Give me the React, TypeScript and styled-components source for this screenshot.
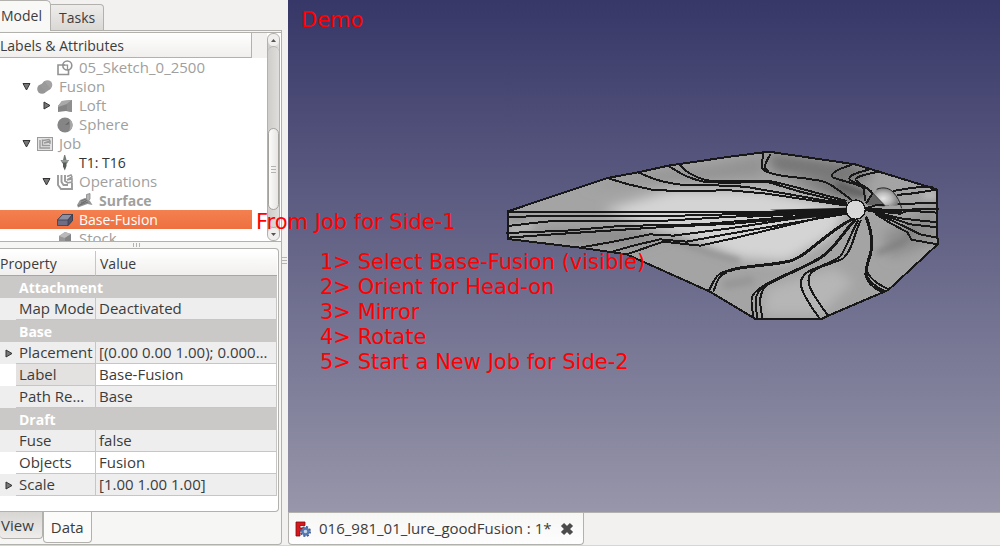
import React from 'react';
import styled, { createGlobalStyle, css } from 'styled-components';

const line = '#b3b1ad';

const GlobalStyle = createGlobalStyle`
  * { box-sizing: border-box; }
  body {
    margin: 0;
    background: #fff;
    color: #3c3c3c;
    font: 15px/19px 'Open Sans', 'Noto Sans', sans-serif;
  }
  button { font: inherit; color: inherit; }
`;

const Window = styled.div`
  display: flex;
  flex-direction: column;
  min-height: 100vh;
  padding-bottom: 3px;
  overflow: hidden;
`;

const Workspace = styled.div`
  flex: 1;
  display: grid;
  grid-template-columns: 282px 6px minmax(0, 1fr);
  background: #f2f1f0;
  border-bottom: 1px solid #d8d6d3;
`;

const Dock = styled.aside`
  display: flex;
  flex-direction: column;
  min-width: 0;
`;

const TopTabs = styled.div`
  display: flex;
  align-items: flex-end;
  height: 31px;
`;

const TopTab = styled.button<{ $active?: boolean }>`
  border: 1px solid ${line};
  padding: 0 8px;
  line-height: 24px;
  height: 27px;
  font-size: 14px;
  background: linear-gradient(#eeedeb, #dad8d5);
  border-left: 0;
  border-radius: 0 4px 0 0;
  ${p => p.$active && css`
    height: 31px;
    padding: 0 8px 0 1px;
    background: #f8f8f7;
    border-bottom: 0;
    border-radius: 0 5px 0 0;
  `}
`;

const TabFill = styled.div`
  flex: 1;
  height: 1px;
  background: ${line};
`;

const DockBody = styled.div`
  flex: 1;
  display: flex;
  flex-direction: column;
  border: 1px solid ${line};
  border-width: 0 1px 1px 0;
  border-radius: 0 0 4px 0;
  background: #f6f6f5;
`;

const TreePane = styled.section`
  display: flex;
  height: 210px;
  margin-top: 1px;
  border: 1px solid ${line};
  border-left: 0;
  border-right: 0;
  background: #fff;
`;

const TreeMain = styled.div`
  flex: 1;
  overflow: hidden;
`;

const TreeHeader = styled.div`
  height: 25px;
  padding-right: 15px;
  background: #f2f1f0;
`;

const TreeTitle = styled.h2`
  margin: 0;
  height: 25px;
  font-size: 14px;
  font-weight: 400;
  line-height: 25px;
  background: linear-gradient(#fff, #f0efed);
  border: 1px solid ${line};
  border-width: 0 1px 1px 0;
`;

const TreeList = styled.ul`
  list-style: none;
  margin: 0;
  padding: 0 15px 0 0;
`;

const TreeRow = styled.li<{ $depth: number; $tone: 'dim' | 'live' | 'selected'; $bold?: boolean }>`
  display: flex;
  align-items: center;
  height: 19px;
  padding-left: ${p => p.$depth * 20 - 2}px;
  color: ${p => ({ dim: '#a09f9e', live: '#333', selected: '#fff' })[p.$tone]};
  font-size: ${p => (p.$tone === 'dim' && !p.$bold ? 15 : 14)}px;
  font-weight: ${p => (p.$bold ? 700 : 400)};
  white-space: nowrap;
  background: ${p => (p.$tone === 'selected' ? 'linear-gradient(#f4804f, #ee7040)' : 'none')};
`;

const Arrow = styled.button`
  width: 16px;
  height: 19px;
  padding: 0;
  border: 0;
  background: none;
  display: grid;
  place-items: center;
`;

const ArrowGap = styled.span`
  width: 16px;
`;

const IconBox = styled.span`
  width: 25px;
  padding-left: 3px;
  height: 16px;
`;

const Scrollbar = styled.div`
  display: flex;
  flex-direction: column;
  width: 13px;
  margin-right: 1px;
  border: 1px solid ${line};
  border-radius: 6px;
  background: linear-gradient(90deg, #cfcdca, #e0dedc);
`;

const ScrollStep = styled.button`
  height: 12px;
  padding: 0;
  border: 0;
  border-radius: 6px;
  background: #f0efee;
  display: grid;
  place-items: center;
`;

const ScrollTrack = styled.div`
  flex: 1;
  display: flex;
  flex-direction: column;
  justify-content: flex-end;
  border: 1px solid ${line};
  border-width: 1px 0;
  border-radius: 6px;
  padding-bottom: 17px;
`;

const Thumb = styled.div`
  height: 82px;
  border: 1px solid #a5a29e;
  border-radius: 6px;
  background: linear-gradient(90deg, #fbfbfa, #e6e5e3);
  display: grid;
  place-items: center;
`;

const Grip = styled.div<{ $vertical?: boolean }>`
  width: ${p => (p.$vertical ? 7 : 5)}px;
  height: ${p => (p.$vertical ? 4 : 7)}px;
  background: repeating-linear-gradient(${p => (p.$vertical ? '90deg' : '180deg')}, #b5b3b0 0 1px, transparent 1px 3px);
`;

const SplitHandle = styled.div`
  height: 6px;
  padding-right: 8px;
  display: grid;
  place-items: center;
`;

const PropertyPane = styled.section`
  flex: 1;
  margin-right: 2px;
  border: 1px solid ${line};
  border-left: 0;
  border-radius: 0 4px 4px 0;
  padding: 2px 1px 1px 0;
  background: #fff;
`;

const PropertyTable = styled.table`
  width: 100%;
  table-layout: fixed;
  border-collapse: separate;
  border-spacing: 0;
  td, th { padding: 0; height: 22px; font-weight: 400; text-align: left; }
`;

const ColumnHead = styled.th`
  && { height: 25px; }
  font-size: 14px;
  background: linear-gradient(#fff, #f0efed);
  border-bottom: 1px solid #a8a6a3;
  & + & { padding-left: 4px; border-left: 1px solid #c8c6c4; }
`;

const GroupHead = styled.th`
  && { padding-left: 19px; font-weight: 700; }
  font-size: 14px;
  color: #fff;
  background: #cbc9c7;
`;

const PropertyRow = styled.tr<{ $shade: string }>`
  background: ${p => p.$shade};
`;

const PropertyName = styled.th<{ $shade: string }>`
  && { padding-left: 3px; }
  background: ${p => p.$shade};
  border-bottom: 1px solid #c8c6c4;
  white-space: nowrap;
`;

const PropertyValue = styled.td`
  && { padding-left: 3px; }
  border: 1px solid #c8c6c4;
  border-width: 0 1px 1px 1px;
  overflow: hidden;
  white-space: nowrap;
`;

const BottomTabs = styled.div`
  display: flex;
  align-items: flex-start;
  height: 32px;
`;

const BottomTab = styled.button<{ $active?: boolean }>`
  height: ${p => (p.$active ? 31 : 27)}px;
  padding: 0 ${p => (p.$active ? 7 : 8)}px 0 ${p => (p.$active ? 7 : 1)}px;
  border: 1px solid ${line};
  border-width: 0 1px 1px ${p => (p.$active ? 1 : 0)}px;
  border-radius: 0 0 4px 4px;
  background: ${p => (p.$active ? '#fbfbfa' : 'linear-gradient(#d8d6d3, #eeedeb)')};
`;

const DockHandle = styled.div`
  padding: 257px 1px 0 0;
  display: flex;
  justify-content: center;
`;

const Documents = styled.main`
  display: flex;
  flex-direction: column;
  min-width: 0;
`;

const Viewport = styled.div`
  position: relative;
  flex: 1;
  display: flex;
  min-height: 512px;
  background: linear-gradient(#373768, #9796aa);
`;

const Scene = styled.svg`
  flex: 1;
  min-width: 0;
`;

const Note = styled.div<{ $left: number; $top: number }>`
  position: absolute;
  left: ${p => p.$left}px;
  top: ${p => p.$top}px;
  color: #f00;
  font: 21px/25px 'DejaVu Sans', sans-serif;
  white-space: nowrap;
`;

const DocumentBar = styled.div`
  display: flex;
  height: 33px;
  border-top: 1px solid ${line};
`;

const DocumentTab = styled.div`
  display: flex;
  align-items: center;
  gap: 8px;
  height: 32px;
  padding: 0 8px 0 6px;
  border: 1px solid ${line};
  border-top: 0;
  border-radius: 0 0 4px 4px;
  background: linear-gradient(#f6f6f5, #fdfdfd);
`;

const CloseButton = styled.button`
  width: 16px;
  height: 16px;
  padding: 0;
  border: 0;
  background: none;
`;

const icons: Record<string, React.ReactNode> = {
  sketch: <g fill="none" stroke="#929292" strokeWidth="1.6"><path d="M8 5H1v9.500h10.500V9" /><circle cx="10.300" cy="5.500" r="4.500" /><path d="M5 5.200h5.500v5" strokeWidth="1.300" /></g>,
  fusion: <g><circle cx="5" cy="10" r="4.800" fill="#969696" /><circle cx="10.500" cy="6" r="4.800" fill="#a3a3a3" /><path d="M3 6.500 7.500 2l6 8-4.500 3Z" fill="#9a9a9a" /></g>,
  loft: <g><path d="M1 8 5 3l10-1v12l-6-1-8 1Z" fill="#858585" /><path d="m1 8 4-5 10-1-5 4-9 3Z" fill="#a9a9a9" /><path d="m10 6 5-4v12l-5-1Z" fill="#8f8f8f" /></g>,
  sphere: <g><circle cx="8" cy="8" r="7.600" fill="#858585" /><path d="M8 8 13.500 2.700A7.600 7.600 0 0 1 12 14.500Q14 8 12.500 4Z" fill="#a8a8a8" /><path d="m8 8 4.500-4-1 3.500Z" fill="#666" /></g>,
  job: <g fill="none" stroke="#9a9a9a"><rect x=".5" y="1.500" width="15" height="13" fill="#e3e3e3" /><path d="M3 4v8h10M5.500 3.500v6H13M6 4.500l6-1 1 1.500-6 2 6-1v2" strokeWidth="1.400" /></g>,
  tool: <g fill="#747a76"><path d="M7.200 0h1l1.300 5h-3.500Z" /><path d="M3.500 5h8.500L10 8.500H5.500Z" /><path d="M6 8h3.500v3l-1.700 4.500L6 11.500Z" fill="#555b57" /><path d="M4.500 6h6.500" stroke="#c5c9c6" strokeWidth=".8" /></g>,
  operations: <g fill="none" stroke="#9a9a9a"><path d="M1 1v10l3 4h11V9M4.500 1v7l2 3H11M8 1v6l3 2" strokeWidth="1.900" /><path d="M10 2.500 14 1l1 2-5 3 5-1v3l-5 1" strokeWidth="1.600" /></g>,
  surface: <g><path d="M0 12 3 7l5-2 5 3 2.500 4-5-1L1 14.500Z" fill="#959595" /><path d="m1 13 8-5m-6 4 8-3m-7-1 5-2m-5 4 7-3" stroke="#6f6f6f" fill="none" /><path d="M9.500 1.500 13 .5V6l-2 2.500L9.500 6Z" stroke="#888" strokeWidth=".8" fill="#b5b5b5" /></g>,
  base: <g stroke="#3d3e4d" strokeWidth=".8"><path d="m.5 8 5-5.500h10v6L11 13.500H.5Z" fill="#6d6e85" /><path d="m.5 8 5-5.500h10L11 8Z" fill="#8d8ea2" /><path d="M11 8v5.500l4.500-5v-6Z" fill="#51526a" /></g>,
  stock: <g><path d="m2 5 6-4 6 2v9l-6 4-6-2Z" fill="#979797" /><path d="m2 5 6-4 6 2-6 4Z" fill="#bababa" /><path d="m8 7 6-4v9l-6 4Z" fill="#858585" /></g>,
};

const Triangle = ({ open }: { open?: boolean }) => (
  <svg width="9" height="9" viewBox="0 0 9 9">
    <path d={open ? 'M1 1.500h7L4.500 8Z' : 'M2 1v7l6-3.500Z'} fill="#777" stroke="#333" />
  </svg>
);

const Chevron = ({ down }: { down?: boolean }) => (
  <svg width="5" height="3" viewBox="0 0 5 3"><path d={down ? 'M0 0h5L2.500 3Z' : 'M0 3h5L2.500 0Z'} fill="#555" /></svg>
);

type Node = { label: string; icon: string; depth: number; state?: 'open' | 'closed'; tone?: 'live' | 'selected'; bold?: boolean };
const nodes: Node[] = [
  { label: '05_Sketch_0_2500', icon: 'sketch', depth: 2 },
  { label: 'Fusion', icon: 'fusion', depth: 1, state: 'open' },
  { label: 'Loft', icon: 'loft', depth: 2, state: 'closed' },
  { label: 'Sphere', icon: 'sphere', depth: 2 },
  { label: 'Job', icon: 'job', depth: 1, state: 'open' },
  { label: 'T1: T16', icon: 'tool', depth: 2, tone: 'live' },
  { label: 'Operations', icon: 'operations', depth: 2, state: 'open' },
  { label: 'Surface', icon: 'surface', depth: 3, bold: true },
  { label: 'Base-Fusion', icon: 'base', depth: 2, tone: 'selected' },
  { label: 'Stock', icon: 'stock', depth: 2 },
];

type Property = { name: string; value?: string; shade?: string; nameShade?: string; expandable?: boolean };
const grey = '#eeeeee';
const properties: Property[] = [
  { name: 'Attachment' },
  { name: 'Map Mode', value: 'Deactivated', shade: grey },
  { name: 'Base' },
  { name: 'Placement', value: '[(0.00 0.00 1.00); 0.000…', shade: grey, expandable: true },
  { name: 'Label', value: 'Base-Fusion', shade: '#fff', nameShade: '#e3e2e0' },
  { name: 'Path Re…', value: 'Base', shade: grey },
  { name: 'Draft' },
  { name: 'Fuse', value: 'false', shade: grey },
  { name: 'Objects', value: 'Fusion', shade: '#fff' },
  { name: 'Scale', value: '[1.00 1.00 1.00]', shade: grey, expandable: true },
];

const outline = 'M24 199 322 99 415 82 505 62 690 35 790 22H820L1065 58 1310 133 1313 298 1165 435 985 512 962 523H768L630 440 380 328 240 308 24 282Z';

const edges = [
  'M322 99 385 118 455 134 525 138 690 136 800 146 1040 182',
  'M415 82C450 98 480 112 550 120L690 122 740 126 880 150 1040 178',
  'M505 62C540 85 560 98 610 110L680 114 800 110 900 140 1040 174',
  'M537 58C560 85 590 98 620 106 680 113 740 106 810 108L870 122 1040 168',
  'M790 24C788 50 776 72 800 80 840 98 870 92 940 104 980 108 990 115 1055 165',
  'M812 26C800 50 785 68 805 78',
  'M1055 60C1010 72 985 90 1000 98 1040 112 1080 118 1092 130L1095 168',
  'M1108 74C1060 84 1035 98 1055 108 1075 120 1100 122 1118 145L1098 176',
  'M1135 80C1090 90 1055 98 1070 108 1085 125 1105 125 1118 145',
  'M24 201H370L1040 201', 'M24 217 110 213H500L800 205',
  'M24 243 110 233 160 228H480L700 215 1040 198', 'M18 264 200 257 360 243 600 238 1040 202',
  'M24 278 160 268 490 246 700 236 1040 204',
  'M240 308 340 290 450 268 520 272 690 250 940 212 1040 204',
  'M330 322 400 302 480 283 560 290 690 266 1040 206',
  'M380 328 490 290 600 302 700 280 960 218 1040 206',
  'M680 206 1040 195',
  'M625 440C642 410 645 382 690 376', 'M640 440C652 410 652 394 680 382',
  'M760 520C758 480 742 455 775 435', 'M772 520C768 480 756 455 790 424', 'M788 520C782 490 770 450 800 420',
  'M1075 225C1050 270 1040 310 1020 335 1000 352 940 370 925 380 885 404 900 440 960 522',
  'M1083 225C1060 270 1060 310 1030 340 1000 355 960 364 945 375 905 398 930 440 985 512',
  'M1100 375C1108 400 1130 415 1165 433', 'M1097 380C1102 404 1125 425 1155 438', 'M1096 385C1098 410 1120 430 1145 440',
  'M1098 190 1130 180 1310 173', 'M1098 192 1190 195 1318 191', 'M1098 196 1200 206 1225 197 1312 203',
  'M1120 200 1200 220 1312 232', 'M1130 203 1230 238 1312 247',
  'M1130 205 1225 250 1260 268 1312 278', 'M1125 205 1160 228 1222 262 1235 284 1312 298',
  'M1180 138 1240 128 1298 125', 'M1190 150 1240 145 1310 134',
];

const strong = [
  'M1058 222C980 260 920 335 870 348 800 365 730 360 685 378',
  'M1066 224C1030 260 1000 320 950 345 880 385 820 400 775 435',
  'M1098 215C1112 250 1120 290 1112 325 1105 350 1095 370 1100 388',
  'M740 214 1040 199', 'M780 207 1040 196', 'M1098 190 1160 197 1205 200', 'M980 168 1040 178',
];

const Model = () => (
  <Scene viewBox="288 0 712 512" role="img" aria-label="Lure solid seen in the 3D view">
    <defs>
      <clipPath id="body"><path d={outline} /></clipPath>
      <filter id="soft" x="-50%" y="-50%" width="200%" height="200%"><feGaussianBlur stdDeviation="17" /></filter>
      <filter id="crease" x="-50%" y="-50%" width="200%" height="200%"><feGaussianBlur stdDeviation="9" /></filter>
      <radialGradient id="ball" cx=".4" cy=".6" r=".65"><stop offset="0" stopColor="#e6e6e6" /><stop offset=".5" stopColor="#bbb" /><stop offset="1" stopColor="#777" /></radialGradient>
    </defs>
    <g transform="translate(500 145) scale(.3333)">
      <g clipPath="url(#body)">
        <path d={outline} fill="#a4a4a4" />
        <g filter="url(#soft)">
          <path d="M310 195 520 135 780 135 1040 190 1000 270 860 350 720 340 560 275 420 235Z" fill="#d4d4d4" />
          <path d="M250 130 420 90 650 60 790 30V90L600 105 440 110Z" fill="#929292" />
          <path d="M800 20 1080 60 1120 100 1040 110 820 80Z" fill="#757575" />
          <path d="M90 255 400 245 500 275 400 310 200 300Z" fill="#8e8e8e" />
          <path d="M800 430 1000 370 1060 410 960 510H790Z" fill="#b6b6b6" />
          <path d="M1150 270 1250 210 1310 180V290L1170 340Z" fill="#8e8e8e" />
          <path d="M860 105 1010 110 1100 150 1060 175Z" fill="#757575" />
        </g>
        <g filter="url(#crease)" fill="none">
          <path d="M510 282C560 295 600 320 720 348" stroke="#888" strokeWidth="12" />
          <path d="M1010 120 1100 150" stroke="#5c5c5c" strokeWidth="22" />
          <path d="M1130 325 1210 290 1245 245" stroke="#7c7c7c" strokeWidth="14" />
          <path d="M670 420 760 405" stroke="#969696" strokeWidth="26" />
          <path d="M1270 150H1310" stroke="#c5c5c5" strokeWidth="16" />
          <path d="M30 222 80 222" stroke="#888" strokeWidth="10" />
          <path d="M30 258 100 240" stroke="#c9c9c9" strokeWidth="10" />
        </g>
      </g>
      <path d="M1118 145 1155 185 1100 180Z" fill="#666" />
      <g fill="none" stroke="#181818" strokeWidth="6" shapeRendering="crispEdges">
        <path d={outline} />
        {edges.map(d => <path key={d} d={d} />)}
        {strong.map(d => <path key={d} d={d} strokeWidth="9" />)}
      </g>
      <path d="M1120 146C1130 126 1165 124 1180 142 1192 155 1197 170 1192 182L1155 182Z" fill="url(#ball)" />
      <path d="M1120 146 1155 182M1130 133C1150 124 1170 130 1180 142 1192 155 1200 170 1205 190" fill="none" stroke="#222" strokeWidth="3" />
      <path d="M810 194 1040 188V208L770 236 900 212Z" fill="#181818" />
      <circle cx="1067" cy="194" r="29" fill="#d8d8d8" stroke="#181818" strokeWidth="4" shapeRendering="crispEdges" />
    </g>
  </Scene>
);

export default function App() {
  return (
    <Window>
      <GlobalStyle />
      <Workspace>
        <Dock>
          <TopTabs>
            <TopTab $active>Model</TopTab>
            <TopTab>Tasks</TopTab>
            <TabFill />
          </TopTabs>
          <DockBody>
            <TreePane>
              <TreeMain>
                <TreeHeader><TreeTitle>Labels &amp; Attributes</TreeTitle></TreeHeader>
                <TreeList>
                  {nodes.map(n => (
                    <TreeRow key={n.label} $depth={n.depth} $tone={n.tone ?? 'dim'} $bold={n.bold}>
                      {n.state ? <Arrow aria-label={`Toggle ${n.label}`}><Triangle open={n.state === 'open'} /></Arrow> : <ArrowGap />}
                      <IconBox><svg width="16" height="16" viewBox="0 0 16 16" display="block">{icons[n.icon]}</svg></IconBox>
                      {n.label}
                    </TreeRow>
                  ))}
                </TreeList>
              </TreeMain>
              <Scrollbar>
                <ScrollStep aria-label="Scroll up"><Chevron /></ScrollStep>
                <ScrollTrack><Thumb><Grip /></Thumb></ScrollTrack>
                <ScrollStep aria-label="Scroll down"><Chevron down /></ScrollStep>
              </Scrollbar>
            </TreePane>
            <SplitHandle><Grip $vertical /></SplitHandle>
            <PropertyPane>
              <PropertyTable>
                <colgroup><col width="16" /><col width="79" /><col /></colgroup>
                <thead><tr><ColumnHead colSpan={2}>Property</ColumnHead><ColumnHead>Value</ColumnHead></tr></thead>
                <tbody>
                  {properties.map(p => p.value === undefined ? (
                    <tr key={p.name}><GroupHead colSpan={3}>{p.name}</GroupHead></tr>
                  ) : (
                    <PropertyRow key={p.name} $shade={p.shade!}>
                      <td>{p.expandable && <Arrow aria-label={`Expand ${p.name}`}><Triangle /></Arrow>}</td>
                      <PropertyName scope="row" $shade={p.nameShade ?? p.shade!}>{p.name}</PropertyName>
                      <PropertyValue>{p.value}</PropertyValue>
                    </PropertyRow>
                  ))}
                </tbody>
              </PropertyTable>
            </PropertyPane>
            <BottomTabs>
              <BottomTab>View</BottomTab>
              <BottomTab $active>Data</BottomTab>
            </BottomTabs>
          </DockBody>
        </Dock>
        <DockHandle><Grip /></DockHandle>
        <Documents>
          <Viewport>
            <Model />
            <Note $left={13} $top={8}>Demo</Note>
            <Note $left={-32} $top={210}>From Job for Side-1</Note>
            <Note $left={32} $top={250}>
              <div>1&gt; Select Base-Fusion (visible)</div>
              <div>2&gt; Orient for Head-on</div>
              <div>3&gt; Mirror</div>
              <div>4&gt; Rotate</div>
              <div>5&gt; Start a New Job for Side-2</div>
            </Note>
          </Viewport>
          <DocumentBar>
            <DocumentTab>
              <svg width="16" height="16" viewBox="0 0 16 16">
                <path d="M1 1h9v3.500H5V7h4v3H5v5H1Z" fill="#d8171c" stroke="#7d0b0e" strokeWidth=".8" />
                <circle cx="10.500" cy="10.500" r="4.500" fill="none" stroke="#3c5a8c" strokeWidth="2" strokeDasharray="2 1.530" />
                <circle cx="10.500" cy="10.500" r="3" fill="#c9d6ea" stroke="#5379b5" strokeWidth="2.400" />
              </svg>
              016_981_01_lure_goodFusion : 1*
              <CloseButton aria-label="Close document">
                <svg width="16" height="16" viewBox="0 0 16 16" display="block"><path d="m3.500 3.500 9 9m0-9-9 9" stroke="#4c4c4c" strokeWidth="4.500" /></svg>
              </CloseButton>
            </DocumentTab>
          </DocumentBar>
        </Documents>
      </Workspace>
    </Window>
  );
}
